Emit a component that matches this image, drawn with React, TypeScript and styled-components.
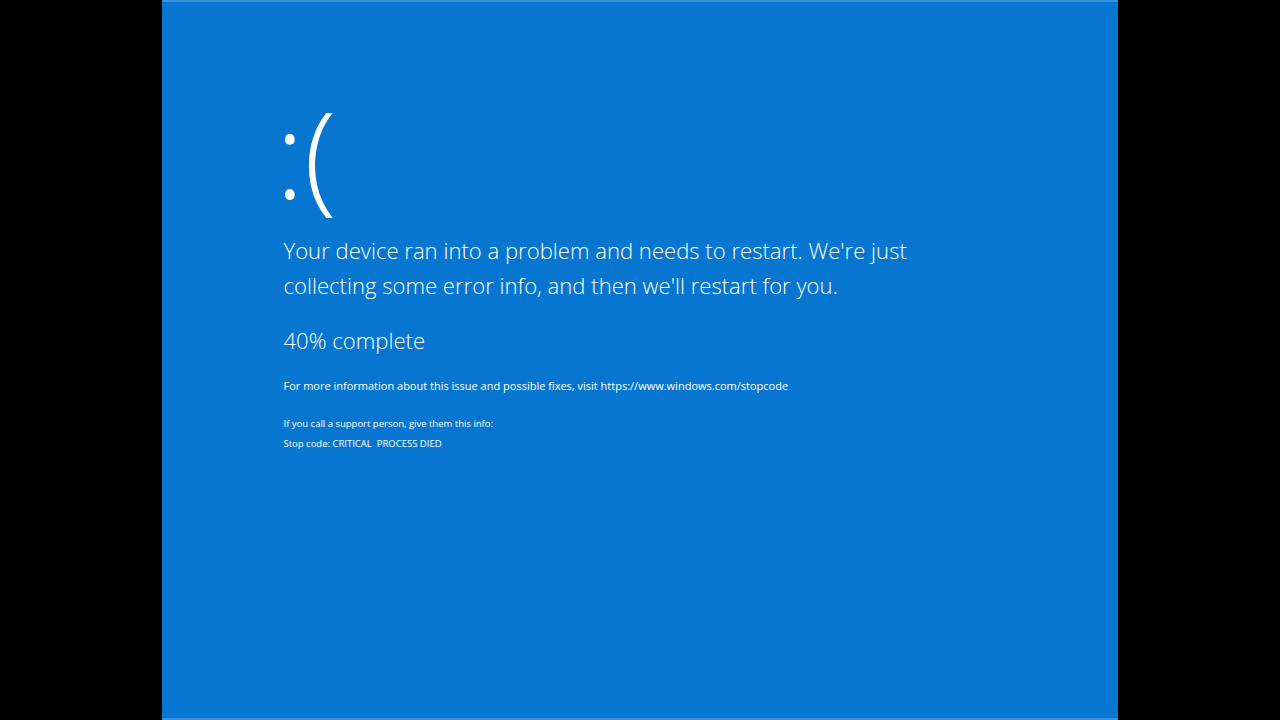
import styled, { createGlobalStyle } from "styled-components";

const Global = createGlobalStyle`
    html, body {
        margin: 0;
        padding: 0;
        background: #000;
    }
`;

export default function App() {
    return (
        <>
            <Global />
            <Screen>
                <Panel>
                    <Face>:(</Face>
                    <Message>
                        Your device ran into a problem and needs to restart. We're just
                        <br />
                        collecting some error info, and then we'll restart for you.
                    </Message>
                    <Progress>40% complete</Progress>
                    <Info>
                        For more information about this issue and possible fixes, visit
                        https://www.windows.com/stopcode
                    </Info>
                    <Support>If you call a support person, give them this info:</Support>
                    <Small>Stop code: CRITICAL&nbsp; PROCESS DIED</Small>
                </Panel>
            </Screen>
        </>
    );
}

const Screen = styled.div`
    width: 1280px;
    height: 720px;
    background: #000;
    display: flex;
    justify-content: center;
`;

const Panel = styled.div`
    width: 956px;
    height: 720px;
    margin-left: -1px;
    box-sizing: border-box;
    padding: 71px 0 0 122px;
    background: #0676d0;
    border-top: 2px solid #3a8fd8;
    border-bottom: 2px solid #3a8fd8;
    color: #fff;
    font-family: "Open Sans", "Noto Sans", sans-serif;
    display: flex;
    flex-direction: column;
`;

const Face = styled.div`
    font-size: 120px;
    font-weight: 300;
    line-height: 160px;
    letter-spacing: 0;
    margin-left: -8px;
`;

const Message = styled.p`
    margin: 0;
    font-size: 22.1px;
    font-weight: 300;
    line-height: 35px;
`;

const Progress = styled.p`
    margin: 22px 0 0;
    font-size: 22.1px;
    font-weight: 300;
    line-height: 30px;
`;

const Info = styled.p`
    margin: 23px 0 0;
    font-size: 11px;
    line-height: 16px;
`;

const Support = styled.p`
    margin: 23px 0 0;
    font-size: 9.5px;
    line-height: 14px;
`;

const Small = styled.p`
    margin: 6px 0 0;
    font-size: 9.5px;
    line-height: 14px;
`;
